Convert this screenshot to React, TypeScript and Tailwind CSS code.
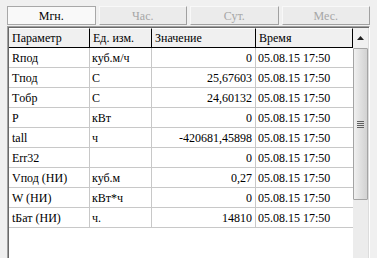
import React from 'react';

type Row = { name: string; unit: string; value: string; time: string };

const rows: Row[] = [
  { name: 'Rпод', unit: 'куб.м/ч', value: '0', time: '05.08.15 17:50' },
  { name: 'Tпод', unit: 'С', value: '25,67603', time: '05.08.15 17:50' },
  { name: 'Tобр', unit: 'С', value: '24,60132', time: '05.08.15 17:50' },
  { name: 'P', unit: 'кВт', value: '0', time: '05.08.15 17:50' },
  { name: 'tall', unit: 'ч', value: '-420681,45898', time: '05.08.15 17:50' },
  { name: 'Err32', unit: '', value: '0', time: '05.08.15 17:50' },
  { name: 'Vпод (НИ)', unit: 'куб.м', value: '0,27', time: '05.08.15 17:50' },
  { name: 'W (НИ)', unit: 'кВт*ч', value: '0', time: '05.08.15 17:50' },
  { name: 'tБат (НИ)', unit: 'ч.', value: '14810', time: '05.08.15 17:50' },
];

const tabs = [
  { label: 'Мгн.', active: true },
  { label: 'Час.', active: false },
  { label: 'Сут.', active: false },
  { label: 'Мес.', active: false },
];

const cols = 'grid grid-cols-[81px_62px_104px_97px]';

const App: React.FC = () => {
  return (
    <div className="w-[377px] h-[258px] overflow-hidden bg-[#f0f0f0] [font-family:'Times_New_Roman',Liberation_Serif,serif] text-[12px] text-black leading-none">
      {/* tab buttons */}
      <div className="flex gap-[3px] pl-[7px] pr-[7px] pt-[6px] h-[26px]">
        {tabs.map((t) =>
          t.active ? (
            <div
              key={t.label}
              className="flex-1 h-[19px] flex items-center justify-center bg-[#f9f9f9] border border-[#a8a8a8]"
            >
              {t.label}
            </div>
          ) : (
            <div
              key={t.label}
              className="flex-1 h-[19px] flex items-center justify-center bg-[#ebebeb] border border-t-[#f8f8f8] border-l-[#f8f8f8] border-r-[#a0a0a0] border-b-[#a0a0a0] text-[#a6a6a6]"
            >
              {t.label}
            </div>
          )
        )}
      </div>

      {/* table frame */}
      <div className="ml-[7px] w-[363px] h-[240px] border-t border-l border-[#a0a0a0] border-r border-r-white">
        <div className="flex h-full border-t border-l border-[#696969]">
          <div className="w-[344px] bg-white">
            {/* header */}
            <div className={`${cols} h-[20px] bg-[#f0f0f0] border-b border-black`}>
              {['Параметр', 'Ед. изм.', 'Значение', 'Время'].map((h) => (
                <div
                  key={h}
                  className="flex items-center pl-[3px] border-r border-black border-t border-t-white"
                >
                  {h}
                </div>
              ))}
            </div>
            {/* rows */}
            {rows.map((r) => (
              <div key={r.name} className={`${cols} h-[20px] border-b border-[#c8c8c8]`}>
                <div className="flex items-center pl-[3px] border-r border-[#c8c8c8]">{r.name}</div>
                <div className="flex items-center pl-[2px] border-r border-[#c8c8c8]">{r.unit}</div>
                <div className="flex items-center justify-end pr-[3px] border-r border-[#c8c8c8]">
                  {r.value}
                </div>
                <div className="flex items-center pl-[2px]">{r.time}</div>
              </div>
            ))}
          </div>

          {/* scrollbar */}
          <div className="w-[16px] flex flex-col bg-[#eaeaea] border-r border-[#dcdcdc]">
            <div className="h-[20px] flex items-center justify-center bg-[#f0f0f0]">
              <svg width="7" height="4" viewBox="0 0 7 4">
                <polygon points="3.5,0 7,4 0,4" fill="#202020" />
              </svg>
            </div>
            <div className="h-[152px] flex items-center justify-center border border-[#a4a4a4] rounded-[1px] bg-gradient-to-r from-[#f0f0f0] via-[#e0e0e0] to-[#d2d2d2]">
              <div className="flex flex-col gap-[1px]">
                <div className="w-[7px] h-[1px] bg-[#606060]" />
                <div className="w-[7px] h-[1px] bg-[#606060]" />
                <div className="w-[7px] h-[1px] bg-[#606060]" />
                <div className="w-[7px] h-[1px] bg-[#606060]" />
              </div>
            </div>
            <div className="flex-1 bg-[#ececec]" />
          </div>
        </div>
      </div>
    </div>
  );
};

export default App;
